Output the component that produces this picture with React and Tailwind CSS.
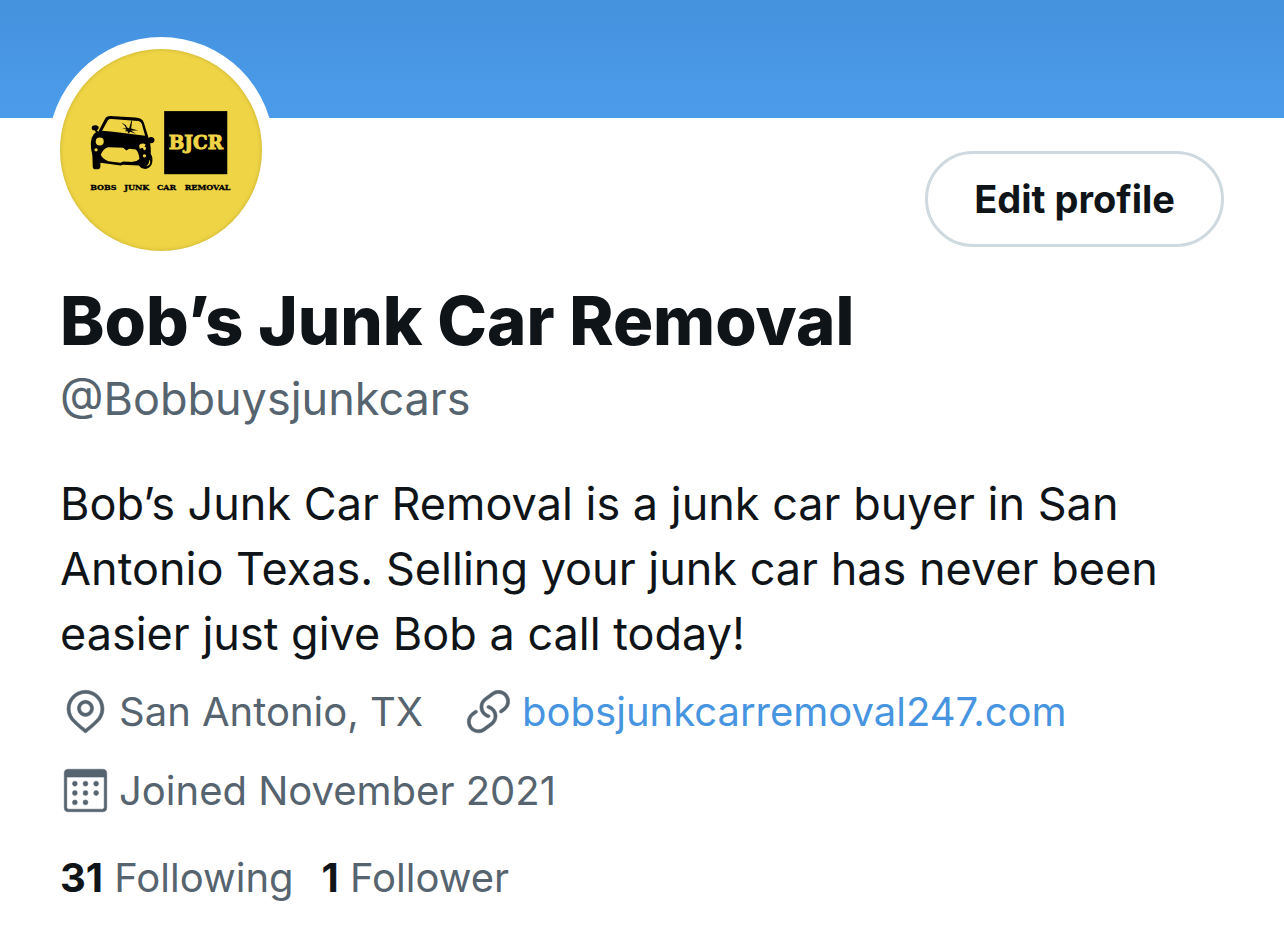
import React from "react";

const profile = {
  name: "Bob’s Junk Car Removal",
  handle: "@Bobbuysjunkcars",
  bio: "Bob’s Junk Car Removal is a junk car buyer in San Antonio Texas. Selling your junk car has never been easier just give Bob a call today!",
  location: "San Antonio, TX",
  website: "bobsjunkcarremoval247.com",
  joined: "Joined November 2021",
  following: 31,
  followers: 1,
};

const iconProps = {
  viewBox: "0 0 24 24",
  className: "size-[51px] shrink-0",
  fill: "currentColor",
  stroke: "currentColor",
  strokeWidth: 0.25,
  "aria-hidden": true,
};

const LocationIcon = () => (
  <svg {...iconProps}>
    <path d="M12 14.315c-2.088 0-3.787-1.698-3.787-3.786S9.913 6.74 12 6.74s3.787 1.7 3.787 3.787-1.7 3.785-3.787 3.785zm0-6.073c-1.26 0-2.287 1.026-2.287 2.287S10.74 12.814 12 12.814s2.287-1.025 2.287-2.286S13.26 8.24 12 8.24z" />
    <path d="M20.692 10.69C20.692 5.9 16.792 2 12 2s-8.692 3.9-8.692 8.69c0 1.902.603 3.708 1.743 5.223l.003-.002.007.015c1.628 2.07 6.278 5.757 6.475 5.912.138.11.302.163.465.163.163 0 .327-.053.465-.162.197-.155 4.847-3.84 6.475-5.912l.007-.014.002.002c1.14-1.516 1.742-3.32 1.742-5.223zM12 20.29c-1.224-.99-4.52-3.715-5.756-5.285-.94-1.25-1.436-2.742-1.436-4.312C4.808 6.727 8.035 3.5 12 3.5s7.192 3.226 7.192 7.19c0 1.57-.497 3.062-1.436 4.313-1.236 1.57-4.532 4.294-5.756 5.285z" />
  </svg>
);

const LinkIcon = () => (
  <svg {...iconProps}>
    <path d="M11.96 14.945c-.067 0-.136-.01-.203-.027-1.13-.318-2.097-.986-2.795-1.932-.832-1.125-1.176-2.508-.968-3.893s.942-2.605 2.068-3.438l3.53-2.608c2.322-1.716 5.61-1.224 7.33 1.1.83 1.127 1.175 2.51.967 3.895s-.943 2.605-2.07 3.438l-1.48 1.094c-.333.246-.804.175-1.05-.158-.246-.334-.176-.804.158-1.05l1.48-1.095c.803-.592 1.327-1.463 1.476-2.45.148-.988-.098-1.975-.69-2.778-1.225-1.656-3.572-2.01-5.23-.784l-3.53 2.608c-.802.593-1.326 1.464-1.475 2.45-.15.99.097 1.975.69 2.778.498.675 1.187 1.15 1.992 1.377.4.114.633.528.52.928-.092.33-.394.547-.722.547z" />
    <path d="M7.27 22.054c-1.61 0-3.197-.735-4.225-2.125-.832-1.127-1.176-2.51-.968-3.894s.943-2.605 2.07-3.438l1.478-1.094c.334-.245.805-.175 1.05.158s.177.804-.157 1.05l-1.48 1.095c-.803.593-1.326 1.464-1.475 2.45-.148.99.097 1.975.69 2.778 1.225 1.657 3.57 2.01 5.23.785l3.528-2.608c1.658-1.225 2.01-3.57.785-5.23-.498-.674-1.187-1.15-1.992-1.376-.4-.113-.633-.527-.52-.927.112-.4.528-.63.926-.522 1.13.318 2.096.986 2.794 1.932 1.717 2.324 1.224 5.612-1.1 7.33l-3.53 2.608c-.933.693-2.023 1.026-3.105 1.026z" />
  </svg>
);

const CalendarIcon = () => (
  <svg {...iconProps}>
    <path
      fillRule="evenodd"
      d="M3.9 2h16.2A1.9 1.9 0 0 1 22 3.9v16.2a1.9 1.9 0 0 1-1.9 1.9H3.9A1.9 1.9 0 0 1 2 20.1V3.9A1.9 1.9 0 0 1 3.9 2zM3.2 5.7v14.2c0 .5.4.9.9.9h15.8c.5 0 .9-.4.9-.9V5.7z"
    />
    <circle cx="7" cy="8.8" r="1.15" />
    <circle cx="12" cy="8.8" r="1.15" />
    <circle cx="17" cy="8.8" r="1.15" />
    <circle cx="7" cy="13.2" r="1.15" />
    <circle cx="12" cy="13.2" r="1.15" />
    <circle cx="17" cy="13.2" r="1.15" />
    <circle cx="7" cy="17.6" r="1.15" />
    <circle cx="12" cy="17.6" r="1.15" />
  </svg>
);

const Logo = () => (
  <svg viewBox="61 87 605 605" className="size-full" role="img" aria-label="Bobs Junk Car Removal">
    {/* mirrors */}
    <path d="M156 322c1-8 14-9 20-3 3 5-1 10-5 11l7 8-5 4-8-11c-6 0-10-4-9-9z" />
    <path d="M344 358c-1-8-13-10-18-4l-6 2 2 14 8-1c8 2 15-2 14-11z" />
    {/* body, roof and wheels */}
    <path
      fillRule="evenodd"
      d="M176 334L196 296Q200 288 211 288L287 292Q308 294 312 307L325 349Q334 370 333 401Q342 418 335 434Q327 448 313 446Q302 444 297 436L250 434L243 436L182 428V440Q182 447 175 447H165Q159 447 159 440L158 406Q147 360 162 342Q168 334 176 334Z
         M205 300L187 332L220 335L316 347L306 312Q304 304 295 303L216 297Q207 296 205 300Z"
    />
    {/* broken windscreen */}
    <path d="M245 307l14 8 2 6 7 4 7-24 2 0-3 24 21 6-21 0 14 10-17-6-5 6-3-8-8 0 6-4-14-5 12 1-4-8z" />
    <g fill="#efd546">
      <circle cx="180" cy="364" r="12" />
      <circle cx="169" cy="389" r="5" />
      <circle cx="314" cy="407" r="5" />
      <path d="M298 377c3-8 13-9 20-3l-4 5 5 3c0 5-3 9-7 8l-3-7-9 3z" />
      <path d="M183 404Q190 385 205 381L250 383L260 391L268 386L288 388Q297 396 299 416Q292 426 270 425L250 424L242 428L206 423Q189 417 183 404Z" />
      <path d="M319 438c6-4 11-12 9-20 7 7 3 19-9 20z" />
    </g>
    <rect x="373" y="273" width="189" height="189" />
    <g fontWeight="700" fontFamily="'DejaVu Serif', serif" textAnchor="middle">
      <text x="468" y="387" fill="#efd546" stroke="#efd546" strokeWidth="3" fontSize="55">
        BJCR
      </text>
      <g fontSize="24" stroke="black" strokeWidth="1">
        <text x="191" y="508">BOBS</text>
        <text x="291" y="508">JUNK</text>
        <text x="380" y="508">CAR</text>
        <text x="503" y="508">REMOVAL</text>
      </g>
    </g>
  </svg>
);

const App = () => {
  return (
    <div className="min-h-screen bg-white font-['Inter',sans-serif] text-[#0f1419]">
      <div className="h-[118px] bg-linear-to-b from-[#4592de] to-[#4b9ceb]" />

      <main className="px-15 pb-10">
        <div className="flex items-start justify-between">
          <div className="-mt-[81px] -ml-3 size-[226px] rounded-full bg-white p-3">
            <div className="size-full overflow-hidden rounded-full bg-[#efd546] shadow-[inset_0_0_4px_rgba(120,100,0,0.35)]">
              <Logo />
            </div>
          </div>
          <button
            type="button"
            className="mt-[33px] h-24 cursor-pointer rounded-full border-3 border-[#cfd9e0] px-[46px] text-[38px] font-bold"
          >
            Edit profile
          </button>
        </div>

        <h1 className="mt-4 text-[67px] leading-[84px] font-extrabold">{profile.name}</h1>
        <p className="mt-1.5 text-[45px] leading-[60px] text-[#566470]">{profile.handle}</p>

        <p className="mt-10.5 text-[45px] leading-[65px]">{profile.bio}</p>

        <div className="mt-5 flex flex-wrap gap-x-10 gap-y-7 text-[40px] leading-[51px] text-[#566470]">
          <span className="flex items-center gap-2">
            <LocationIcon />
            {profile.location}
          </span>
          <span className="flex items-center gap-2">
            <LinkIcon />
            <a href="https://bobsjunkcarremoval247.com" className="text-[#4795e0]">
              {profile.website}
            </a>
          </span>
          {/* always starts its own row */}
          <span className="flex basis-full items-center gap-2">
            <CalendarIcon />
            {profile.joined}
          </span>
        </div>

        <div className="mt-9 flex gap-x-7 text-[40px] leading-[52px] text-[#566470]">
          <a href="#following">
            <b className="text-[#0f1419]">{profile.following}</b> Following
          </a>
          <a href="#followers">
            <b className="text-[#0f1419]">{profile.followers}</b> Follower
          </a>
        </div>
      </main>
    </div>
  );
};

export default App;
